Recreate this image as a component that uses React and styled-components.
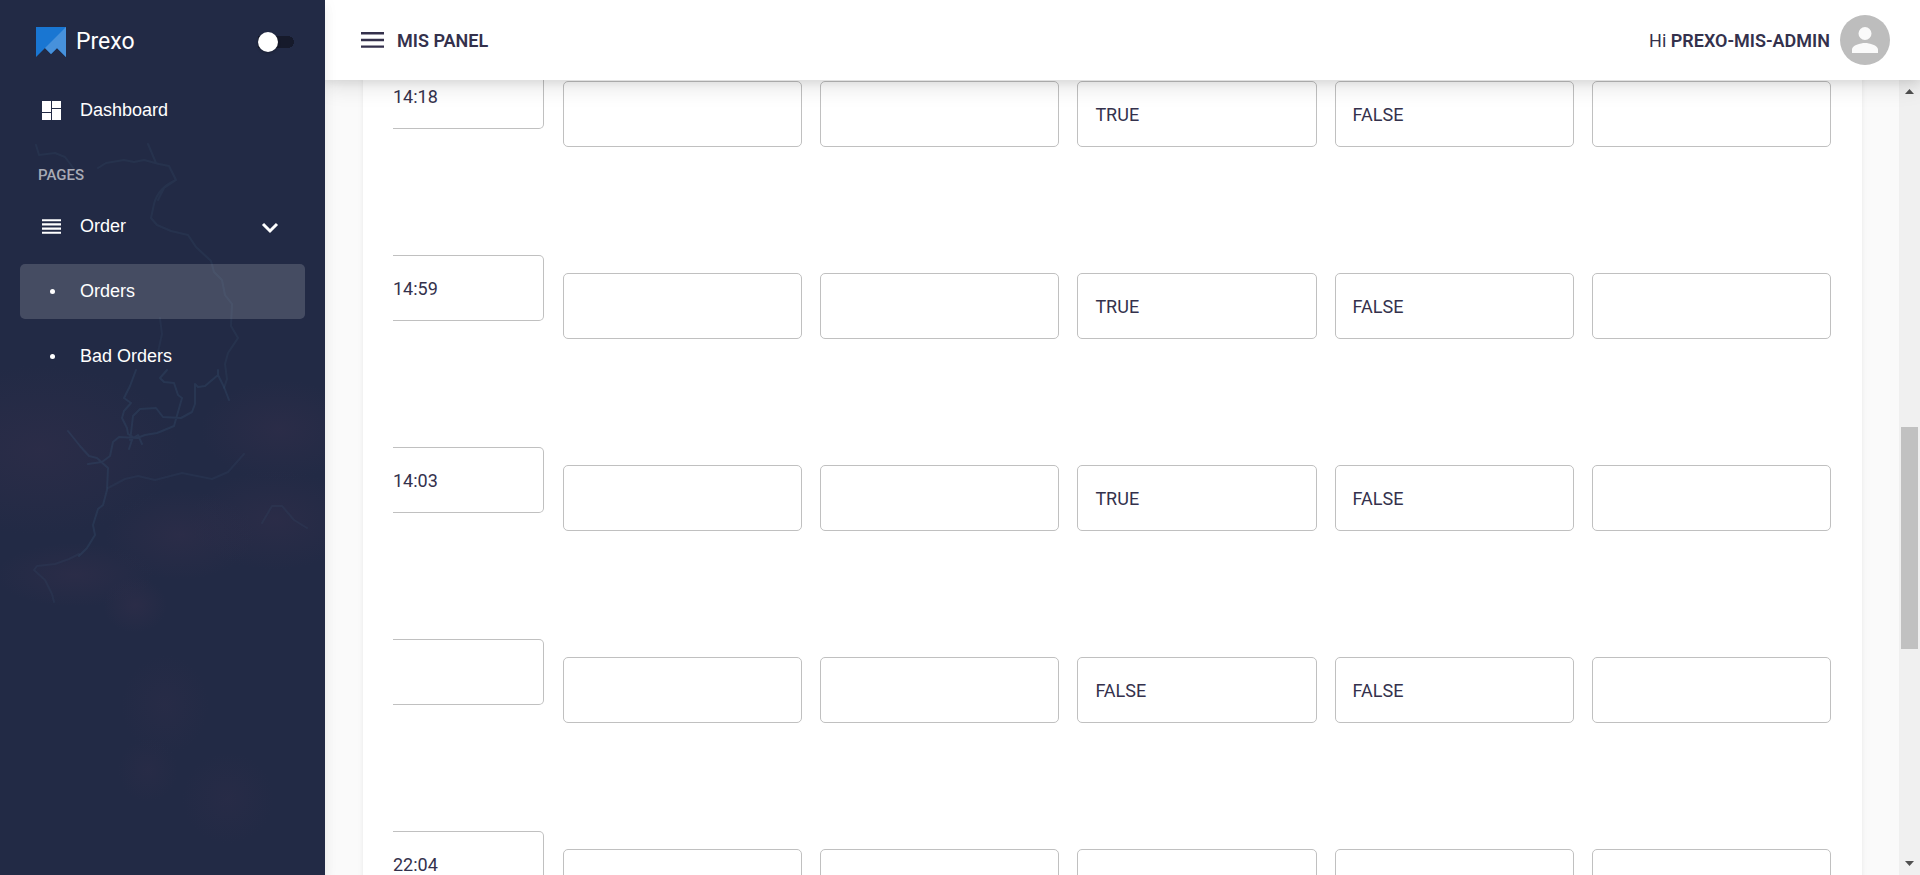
import React, { useState } from "react";
import styled, { createGlobalStyle } from "styled-components";

const GlobalStyle = createGlobalStyle`
  * { box-sizing: border-box; }
  body {
    margin: 0;
    background: #fafafa;
    color: #34314c;
    font-family: Roboto, "Liberation Sans", sans-serif;
    font-size: 18px;
  }
`;

const Shell = styled.div`
  display: flex;
  height: 100vh;
  overflow: hidden;
`;

const Sidebar = styled.aside`
  position: relative;
  z-index: 3;
  flex: 0 0 325px;
  color: #fff;
  background: #222a45;
  box-shadow: 0 5px 5px -3px rgba(0, 0, 0, 0.06), 0 8px 10px 1px rgba(0, 0, 0, 0.042),
    0 3px 14px 2px rgba(0, 0, 0, 0.036);
`;

const Backdrop = styled.svg`
  position: absolute;
  inset: 0;
  width: 100%;
  height: 100%;
`;

const SidebarBody = styled.div`
  position: relative;
  padding: 20px;
`;

const Brand = styled.div`
  display: flex;
  align-items: center;
  height: 44px;
  padding: 0 11px 0 16px;
`;

const BrandName = styled.span`
  flex: 1;
  margin-left: 10px;
  font-size: 23px;
  line-height: 44px;
`;

const Switch = styled.input`
  appearance: none;
  display: flex;
  align-items: center;
  width: 36px;
  height: 20px;
  margin: 0;
  background: linear-gradient(#161a2b, #161a2b) left center / 30px 12px no-repeat,
    radial-gradient(circle at 30px 10px, #161a2b 6px, transparent 6px);
  cursor: pointer;
  &::before {
    content: "";
    width: 20px;
    height: 20px;
    border-radius: 50%;
    background: #fff;
    box-shadow: 0 1px 3px rgba(0, 0, 0, 0.3);
  }
  &:checked { justify-content: flex-end; }
`;

const Nav = styled.nav`
  display: flex;
  flex-direction: column;
  gap: 10px;
  padding-top: 19px;
`;

const navItem = `
  display: flex;
  align-items: center;
  width: 100%;
  height: 55px;
  padding: 0 22px 0 20px;
  border: 0;
  border-radius: 5px;
  color: #fff;
  font-family: "Liberation Sans", Arial, sans-serif;
  font-size: 18px;
  text-align: left;
  text-decoration: none;
  cursor: pointer;
`;

const NavLink = styled.a`
  ${navItem}
  background: ${(p) => (p.$active ? "rgba(255, 255, 255, 0.16)" : "transparent")};
`;

const NavToggle = styled.button`
  ${navItem}
  background: transparent;
`;

const NavIcon = styled.span`
  display: flex;
  justify-content: center;
  width: 23px;
  margin-right: 17px;
`;

const NavText = styled.span`
  flex: 1;
`;

const Bullet = styled.span`
  width: 5px;
  height: 5px;
  margin-left: 2px;
  border-radius: 50%;
  background: #fff;
`;

const SectionLabel = styled.p`
  margin: 0;
  padding-left: 18px;
  font-size: 15px;
  font-weight: 500;
  line-height: 54px;
  height: 41px;
  color: #a7aab5;
`;

const Page = styled.div`
  display: flex;
  flex: 1;
  flex-direction: column;
  min-width: 0;
`;

const TopBar = styled.header`
  position: relative;
  z-index: 2;
  display: flex;
  flex: 0 0 80px;
  align-items: center;
  padding: 0 30px 0 36px;
  background: #fff;
  box-shadow: 0 8px 20px rgba(0, 0, 0, 0.1), 0 3px 8px rgba(0, 0, 0, 0.07);
`;

const IconButton = styled.button`
  display: flex;
  padding: 0;
  border: 0;
  background: none;
  color: inherit;
  cursor: pointer;
`;

const Title = styled.h1`
  flex: 1;
  margin: 0 0 0 13px;
  font-size: 18px;
  font-weight: 600;
`;

const Greeting = styled.span`
  margin-right: 10px;
  strong { font-weight: 600; }
`;

const Body = styled.div`
  display: flex;
  flex: 1;
  min-height: 0;
`;

const Content = styled.main`
  flex: 1;
  min-width: 0;
  overflow: hidden;
  padding: 0 37px 0 38px;
`;

const Card = styled.section`
  margin-top: -17px;
  padding: 0 31px 0 30px;
  background: #fff;
  box-shadow: 0 3px 3px -2px rgba(0, 0, 0, 0.06), 0 3px 4px 0 rgba(0, 0, 0, 0.042),
    0 1px 8px 0 rgba(0, 0, 0, 0.036);
`;

const Table = styled.table`
  width: 100%;
  table-layout: fixed;
  border-collapse: collapse;
`;

const Row = styled.tr`
  height: 192px;
`;

const Cell = styled.td`
  padding: 18px 0 0 18px;
  vertical-align: top;
`;

const DateCell = styled.td`
  width: 152px;
  padding: 0 1px 0 0;
  vertical-align: top;
`;

const Field = styled.input`
  display: block;
  width: 100%;
  height: 66px;
  padding: 0 17px;
  border: 1px solid #c0c0c0;
  border-radius: 5px;
  background: transparent;
  color: inherit;
  font-family: inherit;
  font-size: 18px;
`;

const DateField = styled(Field)`
  padding-left: 0;
  border-left: 0;
  border-radius: 0 5px 5px 0;
`;

const ScrollRail = styled.div`
  display: flex;
  flex: 0 0 21px;
  flex-direction: column;
  align-items: center;
  background: #f0f0f0;
`;

const Arrow = styled.svg`
  flex: 0 0 21px;
  width: 21px;
  height: 21px;
`;

const Track = styled.div`
  display: grid;
  flex: 1;
  grid-template-rows: 326fr 222fr 205fr;
  width: 17px;
`;

const Thumb = styled.div`
  grid-row: 2;
  background: #c1c1c1;
`;

const columns = ["Delivered date", "Base discount", "Diagnostics discount", "Verified", "Returned", "Remarks"];

const orders = [
  ["14:18", "", "", "TRUE", "FALSE", ""],
  ["14:59", "", "", "TRUE", "FALSE", ""],
  ["14:03", "", "", "TRUE", "FALSE", ""],
  ["", "", "", "FALSE", "FALSE", ""],
  ["22:04", "", "", "", "", ""],
];

function MapBackdrop() {
  return (
    <Backdrop viewBox="0 0 325 875" preserveAspectRatio="xMidYMid slice" aria-hidden="true">
      <defs>
        <radialGradient id="haze">
          <stop offset="0" stopColor="#352f4b" stopOpacity="0.45" />
          <stop offset="1" stopColor="#352f4b" stopOpacity="0" />
        </radialGradient>
      </defs>
      <g fill="url(#haze)">
        <ellipse cx="40" cy="450" rx="140" ry="85" />
        <ellipse cx="275" cy="520" rx="85" ry="50" />
        <ellipse cx="180" cy="535" rx="75" ry="45" />
        <ellipse cx="75" cy="575" rx="80" ry="32" />
        <ellipse cx="135" cy="605" rx="32" ry="28" />
        <ellipse cx="280" cy="430" rx="80" ry="50" />
        <ellipse cx="148" cy="770" rx="30" ry="32" opacity=".6" />
        <ellipse cx="228" cy="798" rx="46" ry="46" opacity=".6" />
        <ellipse cx="165" cy="705" rx="44" ry="50" opacity=".6" />
      </g>
      <g fill="none" stroke="#35506f" strokeWidth="2" strokeLinejoin="round" strokeLinecap="round">
        <path
          strokeOpacity="0.22"
          d="M36 145l3 10 16-2 10 4 9 12M98 168l8-5 18-3 10 2 10-2 15 4 10 2 7 14-12 8-6 12M176 180q-18 8-22 24l-3 14 6 7 14 6 17 4 8 12 15 14 3 11 8 8 3 15 7 9-1 22 7 12-10 15-3 11 2 15-3 9M148 144l8 19"
        />
        <path
          strokeOpacity="0.32"
          d="M218 370v5l-13 11-7 1-3-3v20l-3 8-11 6-18-1-7-9-16 1-7 7-2 17-1 7 8-5 4 9M218 375l6 12 5 13M167 370l-7 8 4 4 10 1 4 12 4 3-8 28-12 5-5 2-12 2-8 3-18-1-6 5-3 14-8 6-14 2M136 370l-6 16-6 12 7 5-7 8-2 7 5 10 1 6 5 3-4 12M68 431l12 15 9 10 8 2 11 10-1 22-4 15-5 4-5 16 2 10-8 13-8 8"
        />
        <path
          strokeOpacity="0.2"
          d="M79 554l-10 5-14 5-18 2-3 4 11 10 7 14 2 8M108 488l17-9 13-3 17 4 27-7 30 6 16-7 16-18M262 523l10-17h10l12 14 13 8M160 318l2 16-4 18"
        />
      </g>
    </Backdrop>
  );
}

export default function App() {
  const [open, setOpen] = useState(true);
  return (
    <>
      <GlobalStyle />
      <Shell>
        <Sidebar>
          <MapBackdrop />
          <SidebarBody>
            <Brand>
              <svg width="30" height="30" viewBox="0 0 30 30" aria-hidden="true">
                <path d="M0 0h30v30l-9-9-6 6-6-6-9 9z" fill="#1976d2" />
                <path d="M30 0v30l-9-9-6 6-6-6z" fill="#4791db" />
              </svg>
              <BrandName>Prexo</BrandName>
              <Switch type="checkbox" role="switch" aria-label="Compact sidebar" />
            </Brand>
            <Nav>
              <NavLink href="#dashboard">
                <NavIcon>
                  <svg width="19" height="19" viewBox="0 0 19 19" fill="currentColor" aria-hidden="true">
                    <path d="M0 0h9v11H0zM10 0h9v7h-9zM10 8h9v11h-9zM0 12h9v7H0z" />
                  </svg>
                </NavIcon>
                <NavText>Dashboard</NavText>
              </NavLink>
              <SectionLabel>PAGES</SectionLabel>
              <NavToggle type="button" aria-expanded={open} onClick={() => setOpen(!open)}>
                <NavIcon>
                  <svg width="19" height="15" viewBox="0 0 19 15" fill="currentColor" aria-hidden="true">
                    <path d="M0 .3h19v2H0zM0 4.300h19v2.300H0zM0 8.500h19v2.300H0zM0 12.700h19v2H0z" />
                  </svg>
                </NavIcon>
                <NavText>Order</NavText>
                <svg width="26" height="26" viewBox="0 0 26 26" fill="none" stroke="currentColor" strokeWidth="3" aria-hidden="true">
                  <path d="M6 10l7 7 7-7" />
                </svg>
              </NavToggle>
              {open && (
                <>
                  <NavLink href="#orders" $active aria-current="page">
                    <NavIcon><Bullet /></NavIcon>
                    <NavText>Orders</NavText>
                  </NavLink>
                  <NavLink href="#bad-orders">
                    <NavIcon><Bullet /></NavIcon>
                    <NavText>Bad Orders</NavText>
                  </NavLink>
                </>
              )}
            </Nav>
          </SidebarBody>
        </Sidebar>
        <Page>
          <TopBar>
            <IconButton type="button" aria-label="Toggle menu">
              <svg width="23" height="16" viewBox="0 0 23 16" fill="currentColor" aria-hidden="true">
                <path d="M0 0h23v2.4H0zM0 6.8h23v2.4H0zM0 13.4h23v2.4H0z" />
              </svg>
            </IconButton>
            <Title>MIS PANEL</Title>
            <Greeting>
              Hi <strong>PREXO-MIS-ADMIN</strong>
            </Greeting>
            <IconButton type="button" aria-label="Account">
              <svg width="50" height="50" viewBox="0 0 50 50" aria-hidden="true">
                <circle cx="25" cy="25" r="25" fill="#bdbdbd" />
                <path d="M25 25a6.500 6.500 0 1 0 0-13 6.500 6.500 0 0 0 0 13zM25 28c-4.400 0-13 2.200-13 6.600V38h26v-3.400c0-4.400-8.600-6.600-13-6.600z" fill="#fafafa" />
              </svg>
            </IconButton>
          </TopBar>
          <Body>
            <Content>
              <Card>
                <Table aria-label="Orders">
                  <tbody>
                    {orders.map((order, r) => (
                      <Row key={r}>
                        {order.map((value, c) =>
                          c === 0 ? (
                            <DateCell key={c}>
                              <DateField defaultValue={value} aria-label={columns[c]} />
                            </DateCell>
                          ) : (
                            <Cell key={c}>
                              <Field defaultValue={value} aria-label={columns[c]} />
                            </Cell>
                          )
                        )}
                      </Row>
                    ))}
                  </tbody>
                </Table>
              </Card>
            </Content>
            <ScrollRail aria-hidden="true">
              <Arrow viewBox="0 0 21 21"><path d="M6 14h9l-4.500-5z" fill="#505050" /></Arrow>
              <Track><Thumb /></Track>
              <Arrow viewBox="0 0 21 21"><path d="M6 7h9l-4.500 5z" fill="#505050" /></Arrow>
            </ScrollRail>
          </Body>
        </Page>
      </Shell>
    </>
  );
}
